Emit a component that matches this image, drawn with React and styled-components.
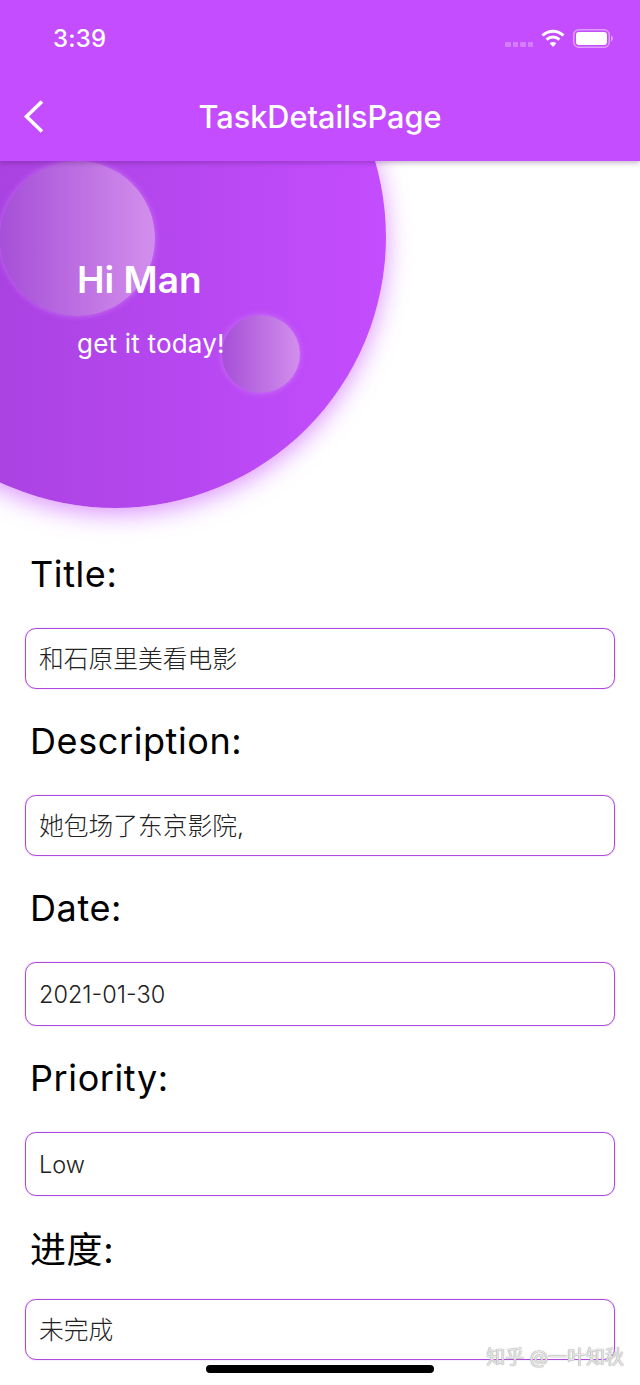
import React from 'react';
import styled, { createGlobalStyle } from 'styled-components';

const GlobalStyle = createGlobalStyle`
  html, body {
    margin: 0;
    padding: 0;
    background: #fff;
  }
  * {
    box-sizing: border-box;
  }
`;

const Page = styled.div`
  position: relative;
  width: 640px;
  height: 1385px;
  overflow: hidden;
  background: #fff;
  font-family: Inter, "Noto Sans CJK SC", sans-serif;
`;

const Header = styled.header`
  position: relative;
  z-index: 2;
  height: 161px;
  background: #c44dff;
  box-shadow: 0 2px 5px rgba(70, 20, 90, 0.3);
  color: #fff;
`;

const StatusBar = styled.div`
  display: flex;
  align-items: center;
  justify-content: space-between;
  height: 76px;
  padding: 0 27px 0 53px;
`;

const Clock = styled.span`
  font-size: 24px;
  font-weight: 500;
  letter-spacing: 0.2px;
`;

const StatusIcons = styled.div`
  display: flex;
  align-items: center;
  gap: 8px;
`;

const SignalDots = styled.div`
  display: flex;
  gap: 2px;
  align-self: flex-end;
  margin-bottom: 1px;
`;

const Dot = styled.i`
  width: 5.5px;
  height: 5px;
  border-radius: 1px;
  background: rgba(255, 255, 255, 0.28);
`;

const NavBar = styled.nav`
  position: relative;
  display: flex;
  align-items: center;
  justify-content: center;
  height: 85px;
  padding-bottom: 3px;
`;

const BackButton = styled.button`
  position: absolute;
  left: 22px;
  top: 23px;
  display: flex;
  padding: 0;
  border: 0;
  background: none;
  color: inherit;
`;

const NavTitle = styled.h1`
  margin: 0;
  font-size: 30.7px;
  font-weight: 500;
  line-height: 40px;
`;

const Hero = styled.section`
  position: relative;
  height: 361px;
  padding: 94px 0 0 77px;
  color: #fff;
`;

const BigCircle = styled.div`
  position: absolute;
  left: -156px;
  top: -195px;
  width: 542px;
  height: 542px;
  border-radius: 50%;
  background: linear-gradient(90deg, #a03ed6 0%, #c44dff 100%);
  box-shadow: 0 6px 24px rgba(196, 77, 255, 0.6);
`;

const Bubble = styled.div`
  position: absolute;
  left: ${(p) => p.$left}px;
  top: ${(p) => p.$top}px;
  width: ${(p) => p.$size}px;
  height: ${(p) => p.$size}px;
  border-radius: 50%;
  background: linear-gradient(90deg, #a64fd8 0%, #d38fec 100%);
  box-shadow: 0 0 6px rgba(225, 160, 255, 0.5);
`;

const Greeting = styled.h2`
  position: relative;
  margin: 0;
  font-size: 37px;
  font-weight: 600;
  line-height: 50px;
`;

const Tagline = styled.p`
  position: relative;
  margin: 21px 0 0;
  font-size: 26px;
  font-weight: 400;
  letter-spacing: 0.2px;
  line-height: 36px;
`;

const Form = styled.form`
  position: relative;
  display: flex;
  flex-direction: column;
  gap: 25px;
  padding: 25px 25px 0;
`;

const Row = styled.div`
  display: flex;
  flex-direction: column;
  gap: 27px;
`;

const Label = styled.label`
  display: flex;
  align-items: center;
  height: ${(p) => (p.$cjk ? 51 : 54)}px;
  padding-left: 5px;
  color: #000;
  font-size: 36px;
  font-weight: 400;
  letter-spacing: 0.6px;
`;

const Value = styled.div`
  display: flex;
  align-items: center;
  width: 590px;
  height: ${(p) => (p.$latin ? 64 : 61)}px;
  padding-left: 13px;
  padding-bottom: ${(p) => (p.$latin ? 0 : 3)}px;
  border: 1px solid #b048e0;
  border-radius: 11px;
  box-shadow: 0 0 1px rgba(180, 70, 230, 0.8);
  color: #222;
  font-size: ${(p) => (p.$latin ? 23.5 : 24.75)}px;
  font-weight: 300;
`;

const Watermark = styled.span`
  position: absolute;
  right: 16px;
  bottom: 15px;
  z-index: 3;
  color: rgba(255, 255, 255, 0.75);
  font-size: 19px;
  line-height: 24px;
  white-space: nowrap;
  text-shadow: 0 0 1px #999, 0 0 1px #999;
`;

const HomeIndicator = styled.div`
  position: absolute;
  left: 206px;
  bottom: 12px;
  z-index: 2;
  width: 228px;
  height: 8px;
  border-radius: 4px;
  background: #000;
`;

const WifiIcon = () => (
  <svg width="24" height="18" viewBox="0 0 24 18" fill="none" stroke="#fff" strokeWidth="3">
    <path d="M1.5 6.5C7.5 0.8 16.5 0.8 22.5 6.5" />
    <path d="M5.6 10.6C9.3 7.2 14.7 7.2 18.4 10.6" />
    <path d="M12 18l-3.4-3.8c2-1.6 4.8-1.6 6.8 0z" fill="#fff" stroke="none" />
  </svg>
);

const BatteryIcon = () => (
  <svg width="40" height="19" viewBox="0 0 40 19" fill="none">
    <rect x="0.75" y="0.75" width="35.5" height="17.5" rx="5" stroke="#fff" strokeOpacity="0.45" strokeWidth="1.5" />
    <rect x="3" y="3" width="31" height="13" rx="3" fill="#fff" />
    <path d="M38 6.5c1.2.4 2 1.6 2 3s-.8 2.600-2 3z" fill="#fff" fillOpacity="0.45" />
  </svg>
);

const BackIcon = () => (
  <svg width="24" height="34" viewBox="0 0 24 34" fill="none" stroke="#fff" strokeWidth="3.600">
    <path d="M20 2.500L4.500 17.500 20 32.500" />
  </svg>
);

const fields = [
  { label: 'Title:', value: '和石原里美看电影' },
  { label: 'Description:', value: '她包场了东京影院,' },
  { label: 'Date:', value: '2021-01-30', latin: true },
  { label: 'Priority:', value: 'Low', latin: true },
  { label: '进度:', value: '未完成', cjk: true },
];

const App = () => (
  <Page>
    <GlobalStyle />
    <Header>
      <StatusBar>
        <Clock>3:39</Clock>
        <StatusIcons>
          <SignalDots>
            <Dot />
            <Dot />
            <Dot />
            <Dot />
          </SignalDots>
          <WifiIcon />
          <BatteryIcon />
        </StatusIcons>
      </StatusBar>
      <NavBar>
        <BackButton type="button">
          <BackIcon />
        </BackButton>
        <NavTitle>TaskDetailsPage</NavTitle>
      </NavBar>
    </Header>
    <Hero>
      <BigCircle />
      <Bubble $left={0} $top={0} $size={155} />
      <Bubble $left={222} $top={154} $size={78} />
      <Greeting>Hi Man</Greeting>
      <Tagline>get it today!</Tagline>
    </Hero>
    <Form>
      {fields.map((field) => (
        <Row key={field.label}>
          <Label $cjk={field.cjk}>{field.label}</Label>
          <Value $latin={field.latin}>{field.value}</Value>
        </Row>
      ))}
    </Form>
    <HomeIndicator />
    <Watermark>知乎 @一叶知秋</Watermark>
  </Page>
);

export default App;
